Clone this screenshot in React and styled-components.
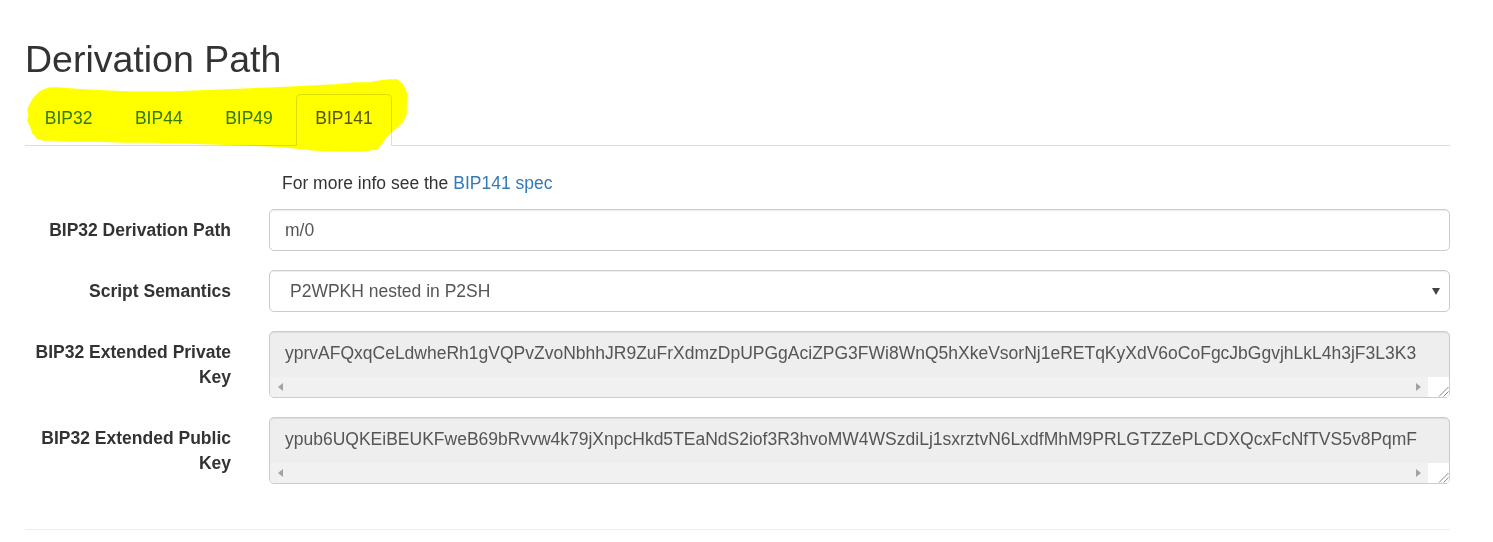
import React from "react";
import styled, { createGlobalStyle } from "styled-components";

const GlobalStyle = createGlobalStyle`
  html, body { margin: 0; padding: 0; background: #fff; }
  body {
    font-family: "Liberation Sans", Arial, Helvetica, sans-serif;
    font-size: 17.5px;
    line-height: 25px;
    color: #333;
  }
  * { box-sizing: border-box; }
`;

const Container = styled.div`
  width: 1425px;
  margin-left: 25px;
`;

const Heading = styled.h2`
  margin: 39px 0 14px;
  font-size: 37.5px;
  font-weight: 500;
  line-height: 41.25px;
  color: #333;
`;

const TabsWrap = styled.div`
  position: relative;
`;

const Nav = styled.ul`
  display: flex;
  margin: 0;
  padding: 0;
  list-style: none;
  border-bottom: 1px solid #ddd;
`;

const Tab = styled.li`
  margin-right: 3px;
  margin-bottom: -1px;
  padding: 11px 18.75px 14px;
  line-height: 25px;
  border: 1px solid ${(p) => (p.$active ? "#ddd" : "transparent")};
  border-bottom-color: transparent;
  border-radius: 5px 5px 0 0;
  background: ${(p) => (p.$active ? "#fff" : "transparent")};
  color: ${(p) => (p.$active ? "#555" : "#337ab7")};
`;

const Highlight = styled.svg`
  position: absolute;
  left: 0;
  top: -20px;
  width: 400px;
  height: 80px;
  pointer-events: none;
  mix-blend-mode: multiply;
`;

const TabContent = styled.div`
  padding-top: 25px;
`;

const Row = styled.div`
  display: grid;
  grid-template-columns: 206px 1181px;
  column-gap: 38px;
  margin-bottom: ${(p) => p.$gap ?? 19}px;
`;

const Info = styled.p`
  grid-column: 2;
  margin: 0;
  padding-left: 13px;
  line-height: 25px;
`;

const Link = styled.a`
  color: #337ab7;
  text-decoration: none;
`;

const Label = styled.label`
  text-align: right;
  font-weight: bold;
  padding-top: 8.75px;
  line-height: 25px;
  color: #333;
`;

const Input = styled.input`
  display: block;
  width: 100%;
  height: 42px;
  padding: 8.75px 15px;
  font: inherit;
  font-size: 17.5px;
  line-height: 25px;
  color: #555;
  background: #fff;
  border: 1px solid #ccc;
  border-radius: 5px;
  box-shadow: inset 0 1px 1px rgba(0, 0, 0, 0.075);
  outline: none;
`;

const Select = styled.div`
  display: flex;
  align-items: center;
  justify-content: space-between;
  height: 42px;
  padding: 0 9px 0 20px;
  color: #555;
  background: #fff;
  border: 1px solid #ccc;
  border-radius: 5px;
  box-shadow: inset 0 1px 1px rgba(0, 0, 0, 0.075);
`;

const TextArea = styled.div`
  display: flex;
  flex-direction: column;
  height: 67px;
  background: #eee;
  border: 1px solid #ccc;
  border-radius: 5px;
  box-shadow: inset 0 1px 1px rgba(0, 0, 0, 0.075);
  overflow: hidden;
`;

const TextLine = styled.div`
  flex: 1;
  padding: 8.75px 15px 0;
  line-height: 25px;
  white-space: nowrap;
  overflow: hidden;
  color: #555;
`;

const ScrollRow = styled.div`
  display: flex;
  height: 20px;
  background: #f1f1f1;
`;

const ScrollBtn = styled.div`
  width: 20px;
  display: flex;
  align-items: center;
  justify-content: center;
`;

const Track = styled.div`
  flex: 1;
`;

const Corner = styled.div`
  width: 21px;
  background: #fff;
  display: flex;
  align-items: flex-end;
  justify-content: flex-end;
`;

const Divider = styled.hr`
  margin: 45px 0 0;
  border: 0;
  border-top: 1px solid #eee;
`;

const Arrow = ({ dir }) => (
  <svg width="5" height="8" viewBox="0 0 5 8">
    {dir === "left" ? (
      <polygon points="5,0 5,8 0,4" fill="#a3a3a3" />
    ) : (
      <polygon points="0,0 0,8 5,4" fill="#a3a3a3" />
    )}
  </svg>
);

const Grip = () => (
  <svg width="12" height="12" viewBox="0 0 12 12">
    <line x1="2" y1="11.5" x2="11.5" y2="2" stroke="#888" strokeWidth="1" />
    <line x1="6.5" y1="11.5" x2="11.5" y2="6.5" stroke="#888" strokeWidth="1" />
  </svg>
);

const KeyBox = ({ value }) => (
  <TextArea>
    <TextLine>{value}</TextLine>
    <ScrollRow>
      <ScrollBtn>
        <Arrow dir="left" />
      </ScrollBtn>
      <Track />
      <ScrollBtn>
        <Arrow dir="right" />
      </ScrollBtn>
      <Corner>
        <Grip />
      </Corner>
    </ScrollRow>
  </TextArea>
);

const tabs = ["BIP32", "BIP44", "BIP49", "BIP141"];

const highlightPath =
  "M19 16 L15 18 L12 21 L9 24 L6 29 L3 35 L4 41 L3 47 L6 53 L8 59 L12 64 L18 66 L30 66 L45 67 L70 67 L100 68 L130 68 L160 69 L195 70 L225 71 L250 72 L271 74 L290 76 L315 77 L335 77 L352 75 L356 70 L360 64 L366 58 L372 53 L378 47 L381 40 L381 30 L382 22 L380 15 L377 10 L372 6 L365 6 L355 7 L345 9 L330 9 L310 11 L290 12 L270 13 L250 14 L225 15 L200 16 L175 17 L150 18 L125 18 L100 18 L80 17 L60 16 L45 15 L33 14 L25 14 Z";

export default function App() {
  return (
    <>
      <GlobalStyle />
      <Container>
        <Heading>Derivation Path</Heading>
        <TabsWrap>
          <Nav>
            {tabs.map((t) => (
              <Tab key={t} $active={t === "BIP141"}>
                {t}
              </Tab>
            ))}
          </Nav>
          <Highlight viewBox="0 0 400 80">
            <path
              d={highlightPath}
              fill="#ffff00"
              stroke="#ffff00"
              strokeWidth="1.5"
              strokeLinejoin="miter"
            />
          </Highlight>
        </TabsWrap>
        <TabContent>
          <Row $gap={13}>
            <Info>
              For more info see the <Link>BIP141 spec</Link>
            </Info>
          </Row>
          <Row>
            <Label>BIP32 Derivation Path</Label>
            <Input readOnly value="m/0" />
          </Row>
          <Row>
            <Label>Script Semantics</Label>
            <Select>
              <span>P2WPKH nested in P2SH</span>
              <svg width="8" height="7" viewBox="0 0 8 7">
                <polygon points="0,0 8,0 4,7" fill="#444" />
              </svg>
            </Select>
          </Row>
          <Row>
            <Label>BIP32 Extended Private Key</Label>
            <KeyBox value="yprvAFQxqCeLdwheRh1gVQPvZvoNbhhJR9ZuFrXdmzDpUPGgAciZPG3FWi8WnQ5hXkeVsorNj1eRETqKyXdV6oCoFgcJbGgvjhLkL4h3jF3L3K3" />
          </Row>
          <Row>
            <Label>BIP32 Extended Public Key</Label>
            <KeyBox value="ypub6UQKEiBEUKFweB69bRvvw4k79jXnpcHkd5TEaNdS2iof3R3hvoMW4WSzdiLj1sxrztvN6LxdfMhM9PRLGTZZePLCDXQcxFcNfTVS5v8PqmF" />
          </Row>
        </TabContent>
        <Divider />
      </Container>
    </>
  );
}
